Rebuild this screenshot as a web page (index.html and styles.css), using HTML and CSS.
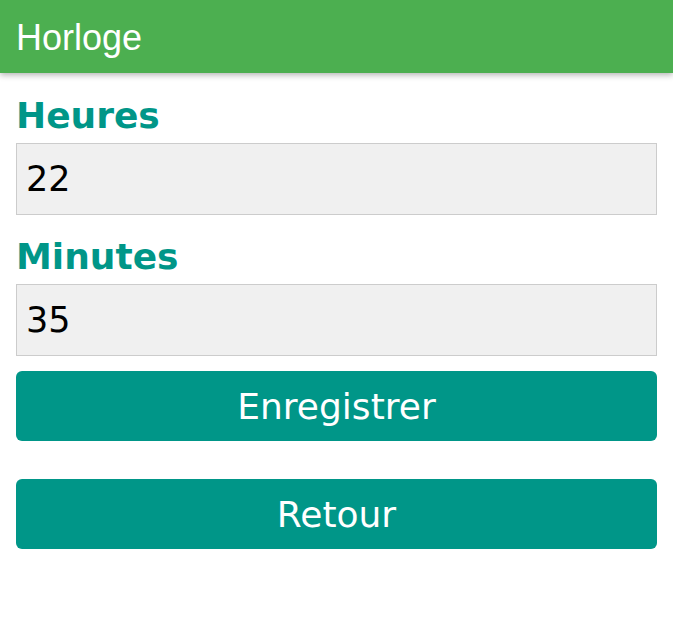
FILE: index.html
```html
<!DOCTYPE html>
<html lang="fr">
<head>
<meta charset="utf-8">
<title>Horloge</title>
<link rel="stylesheet" href="styles.css">
</head>
<body>
<header class="topbar">
  <h1 class="title">Horloge</h1>
</header>
<main class="content">
  <div class="field field-first">
    <label class="label" for="h">Heures</label>
    <input class="input" id="h" type="text" value="22">
  </div>
  <div class="field">
    <label class="label" for="m">Minutes</label>
    <input class="input" id="m" type="text" value="35">
  </div>
  <button class="btn btn-save" type="button">Enregistrer</button>
  <button class="btn btn-back" type="button">Retour</button>
</main>
</body>
</html>
```

FILE: styles.css
```css
html, body {
  margin: 0;
  padding: 0;
  background: #ffffff;
}
body {
  font-family: "DejaVu Sans", sans-serif;
}
.topbar {
  height: 73px;
  background: #4caf50;
  box-shadow: 0 2px 6px rgba(0, 0, 0, 0.3);
  display: flex;
  align-items: center;
  padding: 0 16px;
  box-sizing: border-box;
}
.title {
  margin: 0;
  font-family: "Liberation Sans", Arial, sans-serif;
  font-weight: normal;
  font-size: 36px;
  color: #ffffff;
  line-height: 1;
  padding-top: 2px;
}
.content {
  padding: 0 16px;
  display: flex;
  flex-direction: column;
}
.field {
  display: flex;
  flex-direction: column;
  margin-top: 21px;
}
.field-first {
  margin-top: 22px;
}
.label {
  font-family: "DejaVu Sans", sans-serif;
  font-weight: bold;
  font-size: 36px;
  color: #009688;
  line-height: 42px;
  margin-bottom: 6px;
}
.input {
  box-sizing: border-box;
  height: 72px;
  width: 100%;
  margin: 0;
  border: 1px solid #cccccc;
  background: #f0f0f0;
  font-family: "DejaVu Sans", sans-serif;
  font-size: 35px;
  color: #000000;
  padding: 0 9px;
  outline: none;
  border-radius: 0;
}
.btn {
  box-sizing: border-box;
  height: 70px;
  width: 100%;
  border: none;
  border-radius: 6px;
  background: #009688;
  color: #ffffff;
  font-family: "DejaVu Sans", sans-serif;
  font-size: 36px;
  padding: 0;
  cursor: pointer;
}
.btn-save {
  margin-top: 15px;
}
.btn-back {
  margin-top: 38px;
}
```
